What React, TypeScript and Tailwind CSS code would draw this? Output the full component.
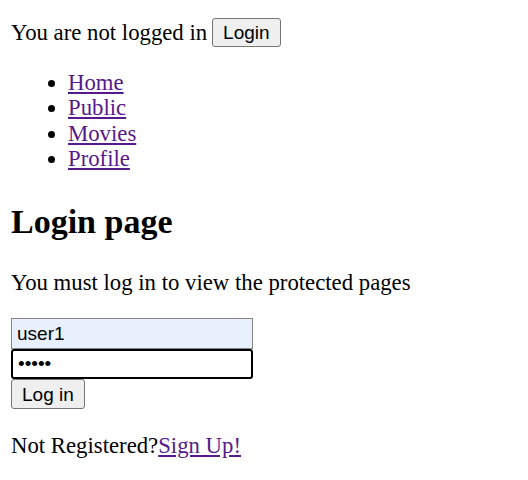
export default function App() {
  return (
    <div className="m-[11px] font-['Liberation_Serif',serif] text-[22.75px] leading-[25.3px] text-black">
      <div className="flex items-center gap-[5px] h-[43px]">
        <span>You are not logged in</span>
        <button className="h-[29px] px-[10px] rounded-[3px] border border-[#767676] bg-[#efefef] font-['Liberation_Sans',sans-serif] text-[19px] leading-none text-black">
          Login
        </button>
      </div>

      <ul className="mt-[16px] pl-[57px] list-disc">
        <li><a href="#" className="text-[#551a8b] underline">Home</a></li>
        <li><a href="#" className="text-[#551a8b] underline">Public</a></li>
        <li><a href="#" className="text-[#551a8b] underline">Movies</a></li>
        <li><a href="#" className="text-[#551a8b] underline">Profile</a></li>
      </ul>

      <h2 className="mt-[31px] mb-[29px] text-[34px] font-bold leading-[39px]">Login page</h2>
      <p className="mb-[23px]">You must log in to view the protected pages</p>

      <form className="flex flex-col items-start mb-[24px] font-['Liberation_Sans',sans-serif] text-[19px]">
        <input
          defaultValue="user1"
          className="w-[242px] h-[31px] px-[5px] border border-[#858585] bg-[#e8f0fe] text-black outline-none"
        />
        <input
          type="password"
          defaultValue="12345"
          className="w-[242px] h-[30px] px-[5px] border-2 border-black rounded-[3px] bg-white text-black outline-none"
        />
        <button className="h-[30px] px-[10px] rounded-[3px] border border-[#767676] bg-[#efefef] text-black leading-none">
          Log in
        </button>
      </form>

      <p>
        Not Registered?<a href="#" className="text-[#551a8b] underline">Sign Up!</a>
      </p>
    </div>
  );
}
